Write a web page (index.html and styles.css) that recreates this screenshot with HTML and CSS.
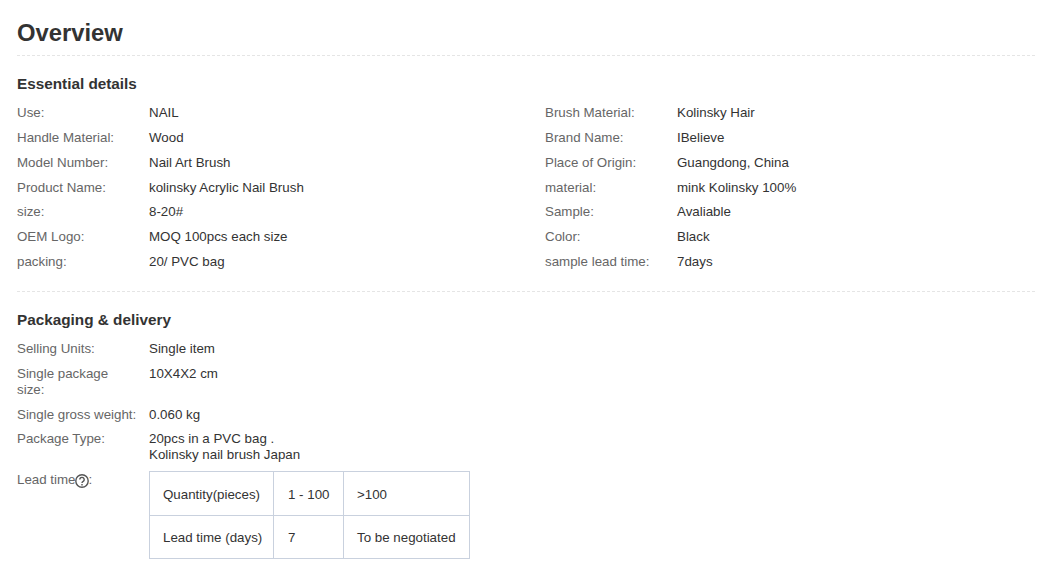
FILE: index.html
```html
<!DOCTYPE html>
<html lang="en">
<head>
<meta charset="utf-8">
<title>Overview</title>
<link rel="stylesheet" href="styles.css">
</head>
<body>
<main class="overview">
  <h1 class="title">Overview</h1>
  <section class="section section-essential">
    <h2 class="heading">Essential details</h2>
    <dl class="attrs attrs-two">
      <div class="attr"><dt>Use:</dt><dd>NAIL</dd></div>
      <div class="attr"><dt>Brush Material:</dt><dd>Kolinsky Hair</dd></div>
      <div class="attr"><dt>Handle Material:</dt><dd>Wood</dd></div>
      <div class="attr"><dt>Brand Name:</dt><dd>IBelieve</dd></div>
      <div class="attr"><dt>Model Number:</dt><dd>Nail Art Brush</dd></div>
      <div class="attr"><dt>Place of Origin:</dt><dd>Guangdong, China</dd></div>
      <div class="attr"><dt>Product Name:</dt><dd>kolinsky Acrylic Nail Brush</dd></div>
      <div class="attr"><dt>material:</dt><dd>mink Kolinsky 100%</dd></div>
      <div class="attr"><dt>size:</dt><dd>8-20#</dd></div>
      <div class="attr"><dt>Sample:</dt><dd>Avaliable</dd></div>
      <div class="attr"><dt>OEM Logo:</dt><dd>MOQ 100pcs each size</dd></div>
      <div class="attr"><dt>Color:</dt><dd>Black</dd></div>
      <div class="attr"><dt>packing:</dt><dd>20/ PVC bag</dd></div>
      <div class="attr"><dt>sample lead time:</dt><dd>7days</dd></div>
    </dl>
  </section>
  <section class="section">
    <h2 class="heading">Packaging &amp; delivery</h2>
    <dl class="attrs">
      <div class="attr"><dt>Selling Units:</dt><dd>Single item</dd></div>
      <div class="attr"><dt>Single package size:</dt><dd>10X4X2 cm</dd></div>
      <div class="attr"><dt>Single gross weight:</dt><dd>0.060 kg</dd></div>
      <div class="attr"><dt>Package Type:</dt><dd>20pcs in a PVC bag .<br>Kolinsky nail brush Japan</dd></div>
      <div class="attr"><dt>Lead time<svg class="help" viewBox="0 0 14 14" width="14" height="14" aria-hidden="true"><circle cx="7" cy="7" r="6.2"/><path d="M4.8 5.6a2.2 2.2 0 1 1 3.4 1.8c-.8.5-1.2.9-1.2 1.7"/><path d="M7 10v1.4"/></svg>:</dt>
        <dd>
          <table class="lead">
            <tr><td class="c1">Quantity(pieces)</td><td class="c2">1 - 100</td><td class="c3">&gt;100</td></tr>
            <tr class="last"><td class="c1">Lead time (days)</td><td class="c2">7</td><td class="c3">To be negotiated</td></tr>
          </table>
        </dd>
      </div>
    </dl>
  </section>
</main>
</body>
</html>
```
FILE: styles.css
```css
* { box-sizing: border-box; }
html, body { margin: 0; padding: 0; background: #fff; }
body { font-family: "Liberation Sans", Arial, sans-serif; font-size: 13.33px; line-height: 16px; color: #333; overflow: hidden; }
.overview { padding: 0 13px 0 17px; }
.title { margin: 0; padding: 18px 0 8px; height: 56px; font-size: 23.8px; line-height: 30px; font-weight: 700; color: #333; border-bottom: 1px dashed #e5e5e5; }
.section { padding-top: 20px; }
.section-essential { height: 236px; border-bottom: 1px dashed #e5e5e5; }
.heading { margin: 0 0 13px; font-size: 15.3px; line-height: 16px; font-weight: 700; color: #333; }
.section-essential .heading { margin-bottom: 13.2px; }
.attrs { margin: 0; display: flex; flex-direction: column; row-gap: 8.8px; }
.attrs-two { display: grid; grid-template-columns: 528px 1fr; }
.attr { display: flex; }
.attr dt { width: 120px; margin-right: 12px; color: #666; flex: none; }
.attr dd { margin: 0; color: #333; }
.help { vertical-align: -4px; margin-left: -1px; fill: none; stroke: #555; stroke-width: 1.4; }
.lead { border-collapse: collapse; table-layout: fixed; width: 321px; margin-top: -1px; }
.lead td { border: 1px solid #c9d1de; padding: 2px 13px 0; height: 44px; white-space: nowrap; }
.lead .last td { height: 43px; padding-top: 1px; }
.lead .c2 { width: 70px; padding-left: 14px; }
.c1 { width: 124px; }
.c3 { width: 126px; }
```
